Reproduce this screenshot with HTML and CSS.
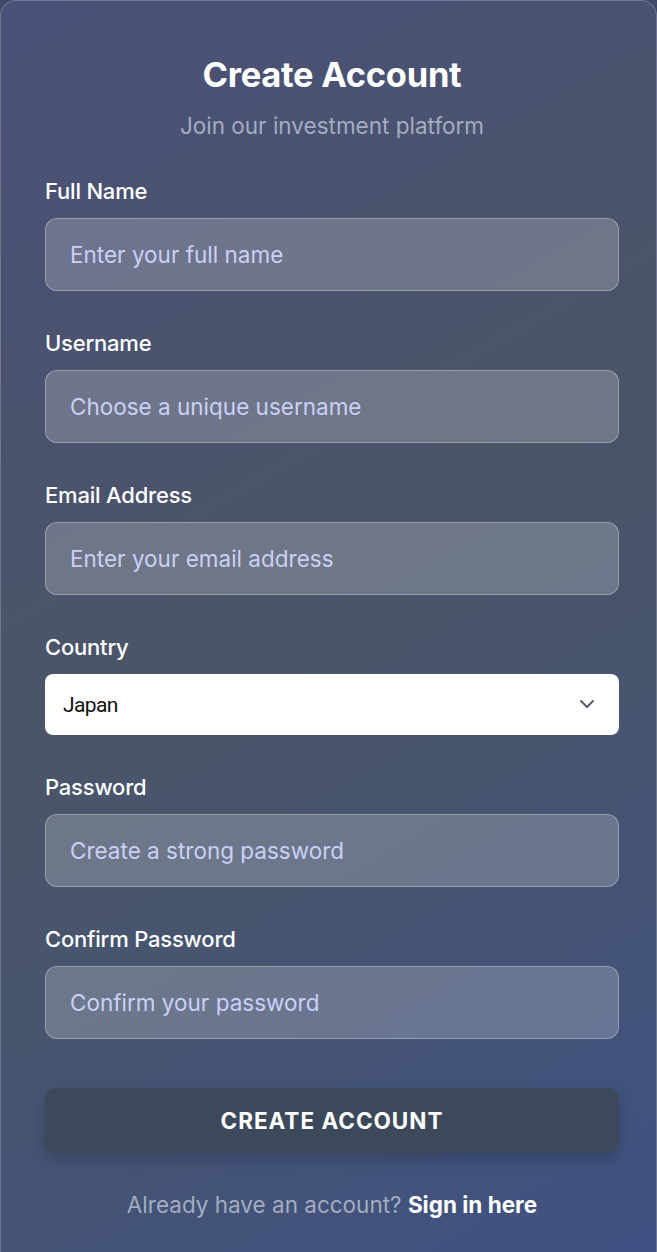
FILE: index.html
```html
<!DOCTYPE html>
<html lang="en">
<head>
  <meta charset="UTF-8">
  <meta name="viewport" content="width=device-width, initial-scale=1.0">
  <title>Create Account</title>
  <link rel="stylesheet" href="styles.css">
</head>
<body>
  <!-- Registration card -->
  <div class="card">
    <header class="card-header">
      <h1>Create Account</h1>
      <p class="subtitle">Join our investment platform</p>
    </header>

    <form class="signup-form" onsubmit="return false;">
      <div class="field">
        <label for="fullName">Full Name</label>
        <input type="text" id="fullName" class="text-input" placeholder="Enter your full name">
      </div>
      <div class="field">
        <label for="username">Username</label>
        <input type="text" id="username" class="text-input" placeholder="Choose a unique username">
      </div>
      <div class="field">
        <label for="email">Email Address</label>
        <input type="email" id="email" class="text-input" placeholder="Enter your email address">
      </div>
      <div class="field">
        <label for="country">Country</label>
        <div class="select-wrap">
          <select id="country" class="select-input">
            <option>Japan</option>
            <option>United States</option>
            <option>United Kingdom</option>
          </select>
          <svg class="chevron" width="20" height="20" viewBox="0 0 20 20" fill="none">
            <path d="M4 7l6 6 6-6" stroke="#555b66" stroke-width="2" stroke-linecap="round" stroke-linejoin="round"/>
          </svg>
        </div>
      </div>
      <div class="field">
        <label for="password">Password</label>
        <input type="password" id="password" class="text-input" placeholder="Create a strong password">
      </div>
      <div class="field">
        <label for="confirm">Confirm Password</label>
        <input type="password" id="confirm" class="text-input" placeholder="Confirm your password">
      </div>

      <button type="submit" class="submit-btn">CREATE ACCOUNT</button>
    </form>

    <p class="footer-text">Already have an account? <a href="#" class="signin-link">Sign in here</a></p>
  </div>
</body>
</html>
```

FILE: styles.css
```css
html, body {
  margin: 0;
  padding: 0;
}
body {
  background-color: #3f4a66;
  font-family: Inter, 'Noto Sans', Arial, sans-serif;
  color: #ffffff;
}
.card {
  box-sizing: border-box;
  min-height: 1252px;
  padding: 54px 37px 40px 44px;
  border: 1px solid rgba(255, 255, 255, 0.22);
  border-bottom: none;
  border-radius: 16px 16px 0 0;
  background: linear-gradient(150deg, #4a5078 0%, #4b5568 45%, #47556f 65%, #3f5183 100%);
}
.card-header {
  text-align: center;
  margin-bottom: 39px;
}
.card-header h1 {
  margin: 0;
  font-size: 34.5px;
  line-height: 40px;
  font-weight: 700;
  letter-spacing: -0.3px;
}
.subtitle {
  margin: 17px 0 0;
  font-size: 22.5px;
  line-height: 28px;
  color: #a3adc0;
}
.field {
  margin-bottom: 40px;
}
.field label {
  display: block;
  font-size: 22px;
  line-height: 24px;
  font-weight: 500;
  margin-bottom: 15px;
  letter-spacing: -0.2px;
}
.text-input {
  display: block;
  box-sizing: border-box;
  width: 100%;
  height: 73px;
  padding: 0 24px;
  border: 1px solid rgba(255, 255, 255, 0.3);
  border-radius: 12px;
  background-color: rgba(255, 255, 255, 0.2);
  color: #ffffff;
  font-family: inherit;
  font-size: 22.5px;
  outline: none;
}
.text-input::placeholder {
  color: #cbd0f7;
}
.select-wrap {
  position: relative;
}
.select-input {
  display: block;
  box-sizing: border-box;
  width: 100%;
  height: 61px;
  padding: 0 18px;
  border: none;
  border-radius: 8px;
  background-color: #ffffff;
  color: #111111;
  font-family: Roboto, Arial, sans-serif;
  font-size: 21px;
  letter-spacing: -0.6px;
  appearance: none;
  -webkit-appearance: none;
  outline: none;
}
.chevron {
  position: absolute;
  right: 22px;
  top: 20px;
  pointer-events: none;
}
.submit-btn {
  display: block;
  width: 100%;
  height: 65px;
  margin-top: 49px;
  border: none;
  border-radius: 10px;
  background-color: #3c495b;
  color: #ffffff;
  font-family: inherit;
  font-size: 22.5px;
  font-weight: 700;
  letter-spacing: 1px;
  box-shadow: 0 6px 14px rgba(20, 30, 50, 0.25);
  cursor: pointer;
}
.footer-text {
  margin: 40px 0 0;
  text-align: center;
  font-size: 22.5px;
  line-height: 24px;
  color: #a3adc0;
}
.signin-link {
  color: #ffffff;
  font-weight: 700;
  text-decoration: none;
}
```
